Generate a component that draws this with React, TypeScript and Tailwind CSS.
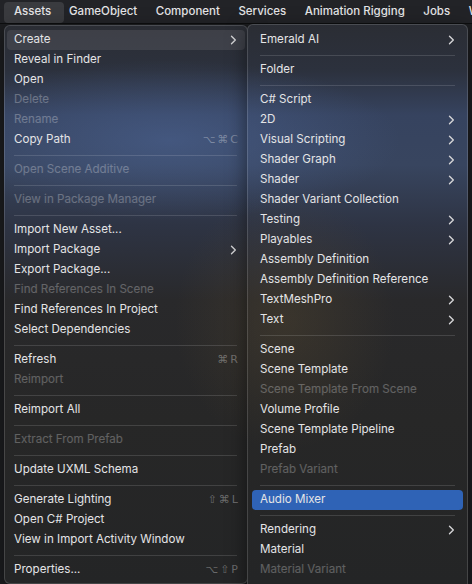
import { Fragment } from 'react'

type Item =
  | { sep: true }
  | { label: string; disabled?: boolean; sub?: boolean; keys?: string; active?: boolean; hover?: boolean }

const left: Item[] = [
  { label: 'Create', sub: true, hover: true },
  { label: 'Reveal in Finder' },
  { label: 'Open' },
  { label: 'Delete', disabled: true },
  { label: 'Rename', disabled: true },
  { label: 'Copy Path', keys: '⌥⌘C' },
  { sep: true },
  { label: 'Open Scene Additive', disabled: true },
  { sep: true },
  { label: 'View in Package Manager', disabled: true },
  { sep: true },
  { label: 'Import New Asset...' },
  { label: 'Import Package', sub: true },
  { label: 'Export Package...' },
  { label: 'Find References In Scene', disabled: true },
  { label: 'Find References In Project' },
  { label: 'Select Dependencies' },
  { sep: true },
  { label: 'Refresh', keys: '⌘R' },
  { label: 'Reimport', disabled: true },
  { sep: true },
  { label: 'Reimport All' },
  { sep: true },
  { label: 'Extract From Prefab', disabled: true },
  { sep: true },
  { label: 'Update UXML Schema' },
  { sep: true },
  { label: 'Generate Lighting', keys: '⇧⌘L' },
  { label: 'Open C# Project' },
  { label: 'View in Import Activity Window' },
  { sep: true },
  { label: 'Properties...', keys: '⌥⇧P' },
]

const right: Item[] = [
  { label: 'Emerald AI', sub: true },
  { sep: true },
  { label: 'Folder' },
  { sep: true },
  { label: 'C# Script' },
  { label: '2D', sub: true },
  { label: 'Visual Scripting', sub: true },
  { label: 'Shader Graph', sub: true },
  { label: 'Shader', sub: true },
  { label: 'Shader Variant Collection' },
  { label: 'Testing', sub: true },
  { label: 'Playables', sub: true },
  { label: 'Assembly Definition' },
  { label: 'Assembly Definition Reference' },
  { label: 'TextMeshPro', sub: true },
  { label: 'Text', sub: true },
  { sep: true },
  { label: 'Scene' },
  { label: 'Scene Template' },
  { label: 'Scene Template From Scene', disabled: true },
  { label: 'Volume Profile' },
  { label: 'Scene Template Pipeline' },
  { label: 'Prefab' },
  { label: 'Prefab Variant', disabled: true },
  { sep: true },
  { label: 'Audio Mixer', active: true },
  { sep: true },
  { label: 'Rendering', sub: true },
  { label: 'Material' },
  { label: 'Material Variant', disabled: true },
]

const menuBg =
  'bg-fixed bg-[radial-gradient(ellipse_230px_80px_at_170px_140px,rgba(80,106,158,0.5),transparent),radial-gradient(ellipse_110px_130px_at_285px_320px,rgba(95,78,48,0.32),transparent),linear-gradient(to_bottom,#2a2b2f_0px,#2c313d_70px,#36435f_115px,#38455f_165px,#2e3444_225px,#29292b_300px,#272727_420px,#242526_584px)]'

function Chevron() {
  return (
    <svg width="7" height="10" viewBox="0 0 7 10" className="shrink-0">
      <path d="M1.5 1.2 5.3 5 1.5 8.8" fill="none" stroke="#d4d4d6" strokeWidth="1.4" strokeLinecap="round" strokeLinejoin="round" />
    </svg>
  )
}

function Menu({ items, className, pad }: { items: Item[]; className: string; pad: string }) {
  return (
    <div className={`${className} ${menuBg} border border-white/15 rounded-[6px] shadow-[0_6px_20px_rgba(0,0,0,0.5)]`}>
      {items.map((it, i) =>
        'sep' in it ? (
          <div key={i} className={`h-[10px] flex items-center ${pad}`}>
            <div className="h-px w-full bg-white/[0.13]" />
          </div>
        ) : (
          <div
            key={i}
            className={`h-[20px] flex items-center justify-between rounded-[4px] ${pad} ${
              it.active ? 'bg-[#2f63b6] text-white' : it.hover ? 'bg-white/[0.09]' : ''
            }`}
          >
            <span className={it.disabled ? 'text-white/[0.27]' : 'text-[#e4e4e6]'}>{it.label}</span>
            {it.sub && <Chevron />}
            {it.keys && (
              <span className="font-['DejaVu_Sans',sans-serif] text-[11px] tracking-[2px] text-white/[0.32] mr-[-3px]">
                {it.keys}
              </span>
            )}
          </div>
        ),
      )}
    </div>
  )
}

export default function App() {
  const bar = ['GameObject', 'Component', 'Services', 'Animation Rigging', 'Jobs', 'Window']
  return (
    <div className="w-[472px] h-[584px] overflow-hidden bg-[#1d1e21] font-['Inter','Liberation_Sans',sans-serif] text-[11.6px] text-[#e4e4e6] antialiased">
      <div className="h-[24px] flex items-center pl-[4px] bg-[#222327] border-b border-black/60 text-[11.5px] font-medium whitespace-nowrap">
        <div className="w-[60px] shrink-0 h-[21px] mt-px flex items-center pl-[10px] rounded-[4px] bg-[#3a3b3f]">Assets</div>
        <div className="flex shrink-0 gap-[18.5px] ml-[5px]">
          {bar.map(b => (
            <Fragment key={b}>
              <span>{b}</span>
            </Fragment>
          ))}
        </div>
      </div>
      <div className="flex items-start pl-[4px] whitespace-nowrap">
        <Menu items={left} className="w-[244px] shrink-0 mt-px pt-[4px] pb-[3px] px-[2px] z-0" pad="pl-[7px] pr-[8px]" />
        <Menu items={right} className="w-[221px] shrink-0 -ml-px pt-[5px] pb-[12px] px-[4px] z-10 relative" pad="px-[8px]" />
      </div>
    </div>
  )
}
